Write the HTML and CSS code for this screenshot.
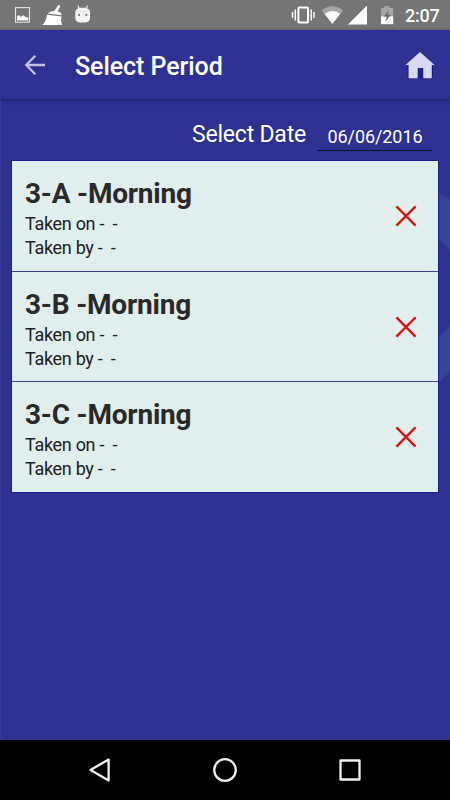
FILE: index.html
```html
<!DOCTYPE html>
<html lang="en">
<head>
<meta charset="utf-8">
<title>Select Period</title>
<link rel="stylesheet" href="styles.css">
</head>
<body>
<div class="screen">
  <header class="status">
    <svg class="notices" width="78" height="30" viewBox="14 0 78 30">
      <rect x="15.500" y="7.600" width="14" height="14.600" fill="none" stroke="#e4e4e4" stroke-width="1.100"/>
      <path d="M17 20.400v-4l1.800-1.400 1.800 2 2.600-1.800 2.400 1.800 2.700.8v2.600z" fill="#fff"/>
      <path d="M58.200 5.200c1.400-.4 2.400.6 1.800 2l-2.600 4c2.600.7 4.200 2 4.400 4L47.900 13.500c1.200-1.700 3.300-2.600 6.300-2.600zM47 14.800l14.600 1.700-.7 3.500 1.200 4.900h-2.600l-1-2.500.3 2.500H42.300c2.400-1.800 3.900-5 4.700-10.100z" fill="#fff"/>
      <path d="M78.300 5.300l1.300 2.500h6.200l1.300-2.500.8.300-.7 2.900c2 .7 2.900 2 2.900 3.900v5.600c0 2.800-2 4.400-4.400 4.400h-6c-2.600 0-4.400-1.600-4.400-4.400v-5.600c0-1.900.9-3.200 2.800-3.900l-.6-2.900z" fill="#f2f2f2"/>
      <path d="M75.500 11.500h14" stroke="#ddd" stroke-width=".7"/>
      <circle cx="79" cy="14.900" r="1.100" fill="#777"/><circle cx="86.300" cy="14.900" r="1.100" fill="#777"/>
    </svg>
    <div class="system">
      <svg width="106" height="30" viewBox="290 0 106 30">
        <rect x="298.400" y="7.400" width="9.600" height="15.200" rx=".8" fill="none" stroke="#fff" stroke-width="2"/>
        <path d="M295.300 9.500v11M311.200 9.500v11M292.500 12v6M314 12v6" stroke="#fff" stroke-width="1.400"/>
        <path d="M321.700 10.400q10.700-8.400 21.400 0L332.400 24z" fill="#a4a4a4"/>
        <path d="M324.500 13.700q7.900-5.600 15.800 0L332.400 24z" fill="#fff"/>
        <path d="M367 5.600v19h-19z" fill="#fff"/>
        <path d="M381 8h3.300V6h5.200v2h3.700v8.300H381z" fill="#a4a4a4"/>
        <path d="M381 16.300h12.200v7.900H381z" fill="#fff"/>
        <path d="M388.800 10.200l-5 6.300h3l-1.500 5.300 5.300-6.800h-3.200z" fill="#666"/>
      </svg>
      <span class="clock">2:07</span>
    </div>
  </header>
  <nav class="appbar">
    <svg class="back" width="22" height="22" viewBox="0 0 22 22"><path d="M21 11H2M11.300 1.800L2.200 11l9.100 9.200" fill="none" stroke="#c1c1e2" stroke-width="2.300"/></svg>
    <h1>Select Period</h1>
    <svg class="home" width="31" height="29" viewBox="0 0 31 29"><path d="M2.700 14h24.900v12H2.700z" fill="#050090"/><path d="M11 16h9v11.200h-9z" fill="#1f2092"/><path d="M15 1l14.500 13h-2.700v12.200q0 1-1 1h-7.500V17.100h-5.600v10.100H4.500q-1 0-1-1V14h-3z" fill="#d8d8ee"/></svg>
  </nav>
  <main>
    <svg class="backdrop" width="12" height="200" viewBox="0 0 12 200"><path d="M0 1l12 6v51L0 47zM0 146l12-12v46L0 191z" fill="#354399"/></svg>
    <div class="date"><label>Select Date</label><span class="field">06/06/2016</span></div>
    <ul class="periods">
      <li><div><h2>3-A -Morning</h2><p>Taken on -&nbsp; -</p><p>Taken by -&nbsp; -</p></div><svg class="cross" width="22" height="22" viewBox="0 0 22 22"><path d="M1.400 1.400l19.200 19.200M20.600 1.400L1.400 20.600"/></svg></li>
      <li><div><h2>3-B -Morning</h2><p>Taken on -&nbsp; -</p><p>Taken by -&nbsp; -</p></div><svg class="cross" width="22" height="22" viewBox="0 0 22 22"><path d="M1.400 1.400l19.200 19.200M20.600 1.400L1.400 20.600"/></svg></li>
      <li><div><h2>3-C -Morning</h2><p>Taken on -&nbsp; -</p><p>Taken by -&nbsp; -</p></div><svg class="cross" width="22" height="22" viewBox="0 0 22 22"><path d="M1.400 1.400l19.200 19.200M20.600 1.400L1.400 20.600"/></svg></li>
    </ul>
  </main>
  <footer class="navbar">
    <svg width="24" height="26" viewBox="0 0 24 26"><path d="M20.600 2.500v21L2.500 13z"/></svg>
    <svg width="26" height="26" viewBox="0 0 26 26"><circle cx="13" cy="13" r="10.800"/></svg>
    <svg width="24" height="24" viewBox="0 0 24 24"><rect x="2.500" y="2.500" width="19" height="19"/></svg>
  </footer>
</div>
</body>
</html>
```

FILE: styles.css
```css
* { box-sizing: border-box; }
body, h1, h2, p, ul { margin: 0; padding: 0; }
body { background: #2e3192; font-family: Roboto, "Liberation Sans", sans-serif; }
svg { display: block; flex: none; }
.screen { width: 450px; height: 800px; display: flex; flex-direction: column; overflow: hidden; }
.status { height: 30px; flex: none; background: #757575; display: flex; justify-content: space-between; padding: 0 10px 0 14px; }
.system { display: flex; }
.clock { width: 35px; margin-left: 9px; color: #fff; font-size: 18px; font-weight: 500; letter-spacing: -.2px; line-height: 32px; white-space: nowrap; }
.appbar { height: 69px; flex: none; display: flex; align-items: center; padding: 1px 14px 0 24px; position: relative; z-index: 1; background: #2e3192; box-shadow: 0 1px 4px rgba(0, 0, 40, .4); }
.appbar h1 { flex: 1; margin-left: 29px; padding-top: 4px; color: #fff; font-size: 25px; font-weight: 500; letter-spacing: -.06px; line-height: 34px; }
main { flex: 1; position: relative; padding: 19px 12px 0 11px; border-left: 1px solid #383d99; }
.backdrop { position: absolute; right: 0; top: 93px; }
.date { height: 43px; display: flex; justify-content: flex-end; padding-right: 6px; color: #fff; }
.date label { font-size: 23px; line-height: 34px; letter-spacing: -.2px; margin-right: 11px; }
.field { width: 115px; height: 33px; border-bottom: 1px solid #111126; text-align: center; font-size: 18px; line-height: 37px; letter-spacing: -.08px; padding-left: 1px; }
.periods { list-style: none; height: 331px; background: #e0eeed; box-shadow: 0 0 0 1px #1a1b91; display: flex; flex-direction: column; position: relative; }
.periods li { flex: 1; display: flex; align-items: center; justify-content: space-between; padding: 0 21px 0 13px; }
.periods li + li { border-top: 1px solid #41427f; }
.periods li > div { padding-top: 4px; }
.periods h2 { font-size: 28px; line-height: 36px; font-weight: 700; letter-spacing: -.2px; color: #292929; }
.periods p { font-size: 18px; line-height: 24px; letter-spacing: -.3px; color: #202020; }
.cross path { stroke: #d81515; stroke-width: 2.4; fill: none; }
.navbar { height: 60px; flex: none; background: #000; display: flex; align-items: center; justify-content: space-between; padding: 0 88px; }
.navbar svg { fill: none; stroke: #f0f0f0; stroke-width: 2.3; stroke-linejoin: round; }
```
